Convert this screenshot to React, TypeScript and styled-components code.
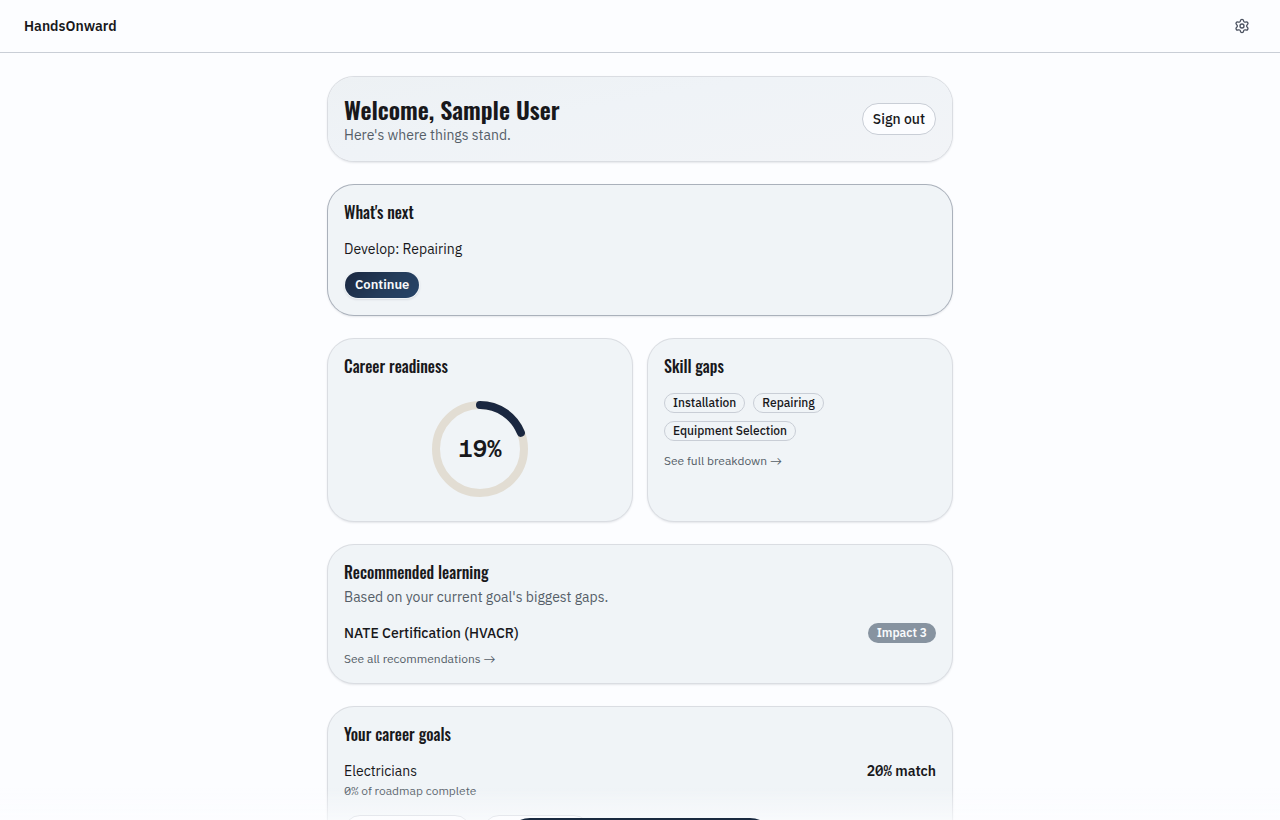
import React from "react";
import styled, { createGlobalStyle } from "styled-components";
import { Settings } from "lucide-react";

const sans = `"IBM Plex Sans", Roboto, "Liberation Sans", sans-serif`;
const mono = `"IBM Plex Mono", "Liberation Mono", monospace`;
const display = `Oswald, "Roboto Condensed", "Open Sans Condensed", sans-serif`;

const ink = "#18181b";
const muted = "#555e68";
const line = "#c9ced6";
const page = "#fcfdff";
const navy = "#1a2740";

const GlobalStyle = createGlobalStyle`
  *, *::before, *::after { box-sizing: border-box; }
  body {
    margin: 0;
    background: ${page};
    color: ${ink};
    font-family: ${sans};
    font-size: 14px;
    line-height: 20px;
  }
  h1, h2, p, ul { margin: 0; padding: 0; }
  button { font-family: inherit; cursor: pointer; }
`;

const TopBar = styled.header`
  display: flex;
  align-items: center;
  justify-content: space-between;
  padding: 10px 24px;
  border-bottom: 1px solid ${line};
`;

const Brand = styled.a`
  color: ${ink};
  font-weight: 600;
  text-decoration: none;
`;

const IconButton = styled.button`
  display: grid;
  place-items: center;
  width: 28px;
  height: 32px;
  padding: 0;
  border: 0;
  background: none;
  color: #4b5260;
`;

const Main = styled.main`
  display: flex;
  flex-direction: column;
  gap: 24px;
  max-width: 672px;
  margin: 0 auto;
  padding: 24px 24px 96px;
`;

const Card = styled.section<{ $tone?: "hero" | "strong" }>`
  padding: 16px;
  border-radius: 26px;
  background: ${p =>
    p.$tone === "hero" ? "linear-gradient(170deg, #edf1f4, #eff3f7 40%, #f2f4f7)" : "#f0f4f7"};
  box-shadow:
    0 0 0 1px ${p => (p.$tone === "strong" ? "#aab1bb" : "#dadde2")},
    0 1px 2px 1px rgba(24, 32, 48, 0.1);
`;

const Row = styled.div<{ $spaced?: boolean }>`
  display: flex;
  align-items: center;
  justify-content: space-between;
  gap: 16px;
  margin-top: ${p => (p.$spaced ? 16 : 0)}px;
`;

const Columns = styled.div`
  display: grid;
  grid-template-columns: repeat(auto-fit, minmax(240px, 1fr));
  gap: 16px;
`;

const Title = styled.h1`
  font-family: ${display};
  font-size: 24px;
  font-weight: 600;
  line-height: 32px;
`;

const Heading = styled.h2`
  font-family: ${display};
  font-size: 16px;
  font-weight: 500;
  line-height: 22px;
`;

const Body = styled.div`
  display: flex;
  flex-direction: column;
  align-items: flex-start;
  gap: 12px;
  margin-top: 16px;
`;

const Lead = styled.p<{ $spaced?: boolean }>`
  margin-top: ${p => (p.$spaced ? 4 : 0)}px;
  color: ${muted};
`;

const Note = styled.p`
  margin-top: 2px;
  color: ${muted};
  font-size: 12px;
  line-height: 16px;
`;

const MoreLink = styled.a<{ $spaced?: boolean }>`
  display: block;
  margin-top: ${p => (p.$spaced ? 8 : 0)}px;
  color: ${muted};
  font-size: 12px;
  line-height: 16px;
  text-decoration: none;
`;

const Arrow = styled.span`
  font-family: Lato, ${sans};
`;

const OutlineButton = styled.button`
  height: 32px;
  padding: 0 10px;
  border: 1px solid ${line};
  border-radius: 16px;
  background: ${page};
  color: ${ink};
  font-size: 14px;
  font-weight: 500;
  line-height: 20px;
`;

const PrimaryButton = styled.button`
  height: 28px;
  padding: 0 10px;
  border: 1px solid transparent;
  border-radius: 14px;
  background: linear-gradient(135deg, ${navy}, #243c5a 55%, #264468) padding-box;
  box-shadow: 0 1px 2px rgba(24, 32, 48, 0.1);
  color: #f8fafc;
  font-size: 13px;
  font-weight: 600;
  line-height: 18px;
`;

const Chips = styled.ul`
  display: flex;
  flex-wrap: wrap;
  gap: 8px;
  max-width: 200px;
  list-style: none;
`;

const Chip = styled.li`
  padding: 1px 8px;
  border: 1px solid ${line};
  border-radius: 10px;
  font-size: 12px;
  font-weight: 500;
  line-height: 16px;
`;

const Badge = styled.span`
  padding: 2px 9px;
  border-radius: 10px;
  background: #8793a0;
  color: #f8fafc;
  font-size: 12px;
  font-weight: 600;
  line-height: 16px;
`;

const Course = styled.span`
  font-weight: 500;
`;

const Match = styled.span`
  font-weight: 600;
`;

const Figure = styled.span`
  font-family: ${mono};
  font-feature-settings: "zero";
`;

const RingBox = styled.div`
  display: grid;
  place-items: center;
  margin-top: 16px;
  padding: 8px 0;

  > * { grid-area: 1 / 1; }
`;

const RingValue = styled.span`
  font-family: "Geist Mono", "Liberation Mono", monospace;
  font-size: 24px;
  font-weight: 600;
  line-height: 32px;
`;

const GoalActions = styled.div`
  display: flex;
  gap: 12px;
  margin-top: 16px;
`;

const GoalButton = styled(OutlineButton)<{ $wide?: boolean }>`
  width: ${p => (p.$wide ? 127 : 107)}px;
`;

const Dock = styled.div`
  position: fixed;
  right: 0;
  bottom: 0;
  left: 0;
  height: 32px;
  padding-top: 30px;
  overflow: hidden;
  background: linear-gradient(rgba(252, 253, 255, 0), rgba(252, 253, 255, 0.65));
  pointer-events: none;
`;

const DockPill = styled.nav`
  width: 272px;
  height: 52px;
  margin: 0 auto;
  border-radius: 26px;
  background: #1a2a40;
`;

function ReadinessRing({ value }: { value: number }) {
  return (
    <RingBox>
      <svg width="96" height="96" viewBox="0 0 96 96" fill="none" strokeWidth="8" aria-hidden="true">
        <circle cx="48" cy="48" r="44" stroke="#e2ddd3" />
        <circle
          cx="48"
          cy="48"
          r="44"
          stroke={navy}
          strokeLinecap="round"
          pathLength={100}
          strokeDasharray={`${value} 100`}
          transform="rotate(-90 48 48)"
        />
      </svg>
      <RingValue>{value}%</RingValue>
    </RingBox>
  );
}

const gaps = ["Installation", "Repairing", "Equipment Selection"];

export default function App() {
  return (
    <>
      <GlobalStyle />
      <TopBar>
        <Brand href="#">HandsOnward</Brand>
        <IconButton type="button" aria-label="Settings">
          <Settings size={16} />
        </IconButton>
      </TopBar>
      <Main>
        <Card $tone="hero">
          <Row>
            <div>
              <Title>Welcome, Sample User</Title>
              <Lead>Here's where things stand.</Lead>
            </div>
            <OutlineButton type="button">Sign out</OutlineButton>
          </Row>
        </Card>

        <Card $tone="strong">
          <Heading>What's next</Heading>
          <Body>
            <p>Develop: Repairing</p>
            <PrimaryButton type="button">Continue</PrimaryButton>
          </Body>
        </Card>

        <Columns>
          <Card>
            <Heading>Career readiness</Heading>
            <ReadinessRing value={19} />
          </Card>
          <Card>
            <Heading>Skill gaps</Heading>
            <Body>
              <Chips>
                {gaps.map(gap => (
                  <Chip key={gap}>{gap}</Chip>
                ))}
              </Chips>
              <MoreLink href="#breakdown">
                See full breakdown <Arrow>→</Arrow>
              </MoreLink>
            </Body>
          </Card>
        </Columns>

        <Card>
          <Heading>Recommended learning</Heading>
          <Lead $spaced>Based on your current goal's biggest gaps.</Lead>
          <Row $spaced>
            <Course>NATE Certification (HVACR)</Course>
            <Badge>Impact 3</Badge>
          </Row>
          <MoreLink $spaced href="#recommendations">
            See all recommendations <Arrow>→</Arrow>
          </MoreLink>
        </Card>

        <Card>
          <Heading>Your career goals</Heading>
          <Row $spaced>
            <span>Electricians</span>
            <Match>
              <Figure>20%</Figure> match
            </Match>
          </Row>
          <Note>
            <Figure>0%</Figure> of roadmap complete
          </Note>
          <GoalActions>
            <GoalButton type="button" $wide />
            <GoalButton type="button" />
          </GoalActions>
        </Card>
      </Main>
      <Dock>
        <DockPill />
      </Dock>
    </>
  );
}
